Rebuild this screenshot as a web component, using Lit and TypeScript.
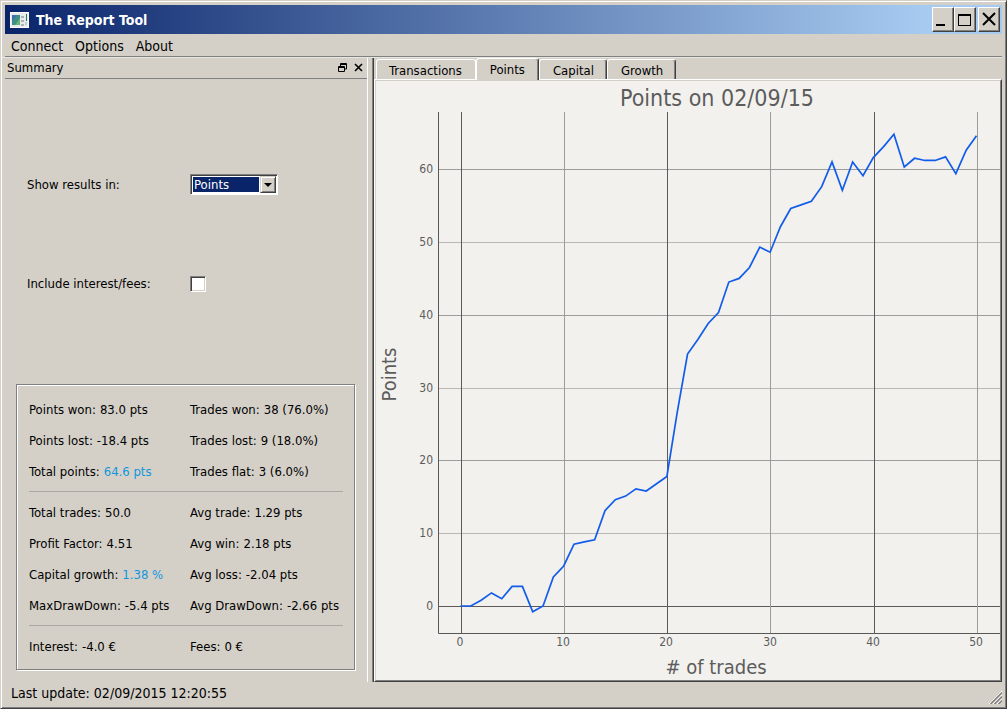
import { LitElement, html, svg, css } from "lit";
import { customElement, state } from "lit/decorators.js";

const POINTS = [
  0, 0, 0.8, 1.8, 1, 2.7, 2.7, -0.8, 0, 4, 5.5, 8.5, 8.8, 9.1, 13.1, 14.6, 15.1,
  16.1, 15.8, 16.8, 17.8, 26.6, 34.6, 36.6, 38.8, 40.3, 44.5, 45, 46.5, 49.3,
  48.6, 52.1, 54.6, 55.1, 55.6, 57.6, 61, 57.1, 61, 59.1, 61.6, 63.1, 64.8,
  60.3, 61.5, 61.2, 61.2, 61.7, 59.4, 62.6, 64.6,
];

@customElement("points-chart")
class PointsChart extends LitElement {
  @state() private w = 624;
  @state() private h = 599;
  private observer?: ResizeObserver;

  static styles = css`
    :host { display: block; overflow: hidden; min-width: 0; min-height: 0; contain: size; }
    svg { display: block; }
    text { fill: #5c5c5c; font-family: "DejaVu Sans Condensed", "Noto Sans", sans-serif; }
    .tick { font-size: 12px; }
    .title { font-size: 23px; }
    .name { font-size: 20px; }
    .axis { stroke: #585858; }
    .strong { stroke: #5a5a5a; }
    .medium { stroke: #9c9c9a; }
    .soft { stroke: #bab9b6; }
    .series { fill: none; stroke: #125cea; stroke-width: 1.7; }
  `;

  connectedCallback() {
    super.connectedCallback();
    this.observer = new ResizeObserver(([entry]) => {
      this.w = Math.round(entry.contentRect.width);
      this.h = Math.round(entry.contentRect.height);
    });
    this.observer.observe(this);
  }

  disconnectedCallback() {
    this.observer?.disconnect();
    super.disconnectedCallback();
  }

  render() {
    const left = 62;
    const top = 31;
    const bottom = this.h - 47;
    const x = (n: number) => left + 22 + ((this.w - left - 46) * n) / 50;
    const y = (v: number) => bottom - 27 - ((bottom - top - 58) * v) / 63.6;
    const px = (n: number) => Math.round(n) + 0.5;
    const shade = (n: number) => (n % 20 ? "medium" : "strong");
    const rowShade = (n: number) => (n === 0 ? "strong" : n % 20 ? "soft" : "medium");
    return html`<svg width=${this.w} height=${this.h} role="img" aria-label="Points per number of trades">
      ${[10, 20, 30, 40, 50, 60, 0].map(
        (v) => svg`<line class=${rowShade(v)} x1=${left} x2=${this.w} y1=${px(y(v))} y2=${px(y(v))} />
          <text class="tick" text-anchor="end" x=${left - 5} y=${Math.round(y(v)) + 4}>${v}</text>`
      )}
      ${[0, 10, 20, 30, 40, 50].map(
        (n) => svg`<line class=${shade(n)} x1=${px(x(n) + 0.7)} x2=${px(x(n) + 0.7)} y1=${top} y2=${bottom} />
          <text class="tick" text-anchor="middle" x=${Math.round(x(n))} y=${bottom + 13}>${n}</text>`
      )}
      <path class="axis" fill="none" d="M${left + 0.5} ${top}V${bottom + 0.5}H${this.w}" />
      <polyline class="series" points=${POINTS.map((v, n) => `${x(n) + 0.5},${y(v)}`).join(" ")} />
      <text class="title" text-anchor="middle" x=${(left + this.w) / 2 - 2} y="25">Points on 02/09/15</text>
      <text class="name" text-anchor="middle" x=${(left + this.w) / 2 - 3} y=${this.h - 6}># of trades</text>
      <text class="name" text-anchor="middle" transform="translate(20 ${(top + bottom) / 2 + 2}) rotate(-90)">Points</text>
    </svg>`;
  }
}

const TABS = ["Transactions", "Points", "Capital", "Growth"];

const GROUPS: [string, string, boolean?][][] = [
  [
    ["Points won", "83.0 pts"], ["Trades won", "38 (76.0%)"],
    ["Points lost", "-18.4 pts"], ["Trades lost", "9 (18.0%)"],
    ["Total points", "64.6 pts", true], ["Trades flat", "3 (6.0%)"],
  ],
  [
    ["Total trades", "50.0"], ["Avg trade", "1.29 pts"],
    ["Profit Factor", "4.51"], ["Avg win", "2.18 pts"],
    ["Capital growth", "1.38 %", true], ["Avg loss", "-2.04 pts"],
    ["MaxDrawDown", "-5.4 pts"], ["Avg DrawDown", "-2.66 pts"],
  ],
  [["Interest", "-4.0 €"], ["Fees", "0 €"]],
];

@customElement("app-root")
class AppRoot extends LitElement {
  @state() private tab = "Points";

  static styles = css`
    :host {
      display: block;
      height: 100vh;
      font: 13px/15px "DejaVu Sans Condensed", "Noto Sans", sans-serif;
      color: #000;
    }
    * { box-sizing: border-box; }
    button, select, input { font: inherit; color: inherit; margin: 0; border-radius: 0; }
    button { padding: 0; border: 0; background: none; }
    .window {
      display: flex; flex-direction: column; height: 100%;
      background: #d4d0c8;
      border: 1px solid; border-color: #d4d0c8 #404040 #404040 #d4d0c8;
      box-shadow: inset 1px 1px #fff, inset -1px -1px #808080;
      padding: 4px 4px 1px 1px;
    }
    .titlebar {
      display: flex; align-items: center; flex: none; height: 29px; margin-left: 3px; padding: 0 2px 0 5px;
      background: linear-gradient(90deg, #0a246a, #a6caf0 92%);
      color: #fff;
    }
    .titlebar h1 { flex: 1; margin: 0 0 0 7px; font-size: 14px; line-height: 18px; font-weight: bold; }
    .caption {
      width: 22px; height: 25px; background: #d4d0c8;
      border: 1px solid; border-color: #fff #404040 #404040 #fff;
      box-shadow: inset -1px -1px #808080;
    }
    .caption.close { margin-left: 2px; }
    svg { display: block; }
    .menubar {
      display: flex; flex: none; gap: 12px; height: 23px; margin-left: 3px; padding: 2px 6px 0;
      border-bottom: 1px solid #808080;
    }
    .menubar button { font-size: 14px; line-height: 20px; }
    .main { display: flex; flex: 1; min-height: 0; border-top: 1px solid #e8e6e0; }
    .dock { display: flex; flex-direction: column; flex: none; width: 365px; }
    .dock-title {
      display: flex; align-items: center; gap: 6px; height: 21px; margin-left: 3px; padding: 0 4px 0 2px;
      border-bottom: 1px solid #808080;
    }
    .dock-title h2 { flex: 1; margin: 0; font-size: 13px; line-height: 20px; font-weight: normal; }
    .form {
      display: flex; flex: 1; flex-direction: column; justify-content: space-evenly;
      padding: 17px 0 12px 25px;
    }
    .field { display: grid; grid-template-columns: 163px auto; align-items: center; justify-content: start; height: 21px; }
    .combo {
      display: grid; grid-template-columns: 1fr 16px; width: 88px; height: 21px;
      border: 1px solid; border-color: #808080 #fff #fff #808080;
      box-shadow: inset 1px 1px #404040; background: #fff; padding: 1px;
    }
    .combo select {
      grid-area: 1 / 1 / 2 / 3; appearance: none; border: 0; outline: 0;
      margin: 1px 17px 1px 1px; padding: 0 1px; line-height: 15px;
      background: #0a246a; color: #fff;
    }
    .drop {
      grid-area: 1 / 2; display: grid; place-items: center; pointer-events: none;
      background: #d4d0c8; border: 1px solid; border-color: #d4d0c8 #404040 #404040 #d4d0c8;
      box-shadow: inset 1px 1px #fff, inset -1px -1px #808080;
    }
    .check {
      appearance: none; width: 16px; height: 16px; background: #fff;
      border: 1px solid; border-color: #808080 #fff #fff #808080;
      box-shadow: inset 1px 1px #404040, inset -1px -1px #d4d0c8;
    }
    .check:checked { background: #fff radial-gradient(#000 35%, transparent 40%); }
    .stats {
      margin: 0 12px 12px 14px; padding: 9px 11px 3px 12px;
      border: 1px solid #808080; box-shadow: inset 1px 1px #fff, 1px 1px #fff;
    }
    .group { display: grid; grid-template-columns: 161px 1fr; margin: 0; padding-bottom: 4px; }
    .group + .group { border-top: 1px solid #aaa8a2; padding-top: 5px; }
    .stat { display: flex; gap: 4px; line-height: 31px; white-space: nowrap; }
    .stat dd { margin: 0; }
    .accent { color: #1296db; }
    .separator {
      flex: none; width: 7px; border: 1px solid; border-width: 0 1px; border-color: #fff #404040 #fff #fff;
      box-shadow: inset -1px 0 #808080;
    }
    .content { display: flex; flex: 1; flex-direction: column; min-width: 0; }
    .tabs { display: flex; align-items: flex-end; height: 21px; padding-left: 2px; }
    .tab {
      height: 20px; padding: 2px 13px 0 12px; border: 1px solid;
      border-color: #fff #404040 transparent #fff; border-bottom: 0;
      border-radius: 3px 3px 0 0; box-shadow: inset -1px 0 #808080;
      background: #d4d0c8;
    }
    .tab.before { border-right-color: #fff; box-shadow: none; }
    .tab.selected { height: 22px; padding: 1px 13px 2px; margin-bottom: -1px; position: relative; }
    .tab + .tab:not(.selected) { padding: 2px 12px 0 13px; }
    .pane {
      flex: 1; display: grid; min-height: 0; background: #f2f1ed;
      border: 1px solid; border-color: #fff #404040 #404040 #fff;
    }
    .inner { display: grid; border: 1px solid; border-color: #d4d0c8 #808080 #808080 #d4d0c8; min-width: 0; min-height: 0; }
    .status { display: flex; flex: none; justify-content: space-between; align-items: flex-end; height: 25px; padding: 0 0 3px 9px; }
    .status output { font-size: 14px; line-height: 22px; }
  `;

  render() {
    const active = TABS.indexOf(this.tab);
    return html`<div class="window">
      <header class="titlebar">
        <svg width="19" height="16" viewBox="0 0 19 16" aria-hidden="true">
          <rect width="19" height="16" fill="#e9ebea" />
          <path d="M0 .5H19M.5 0V16M18.5 0V16M0 15.5H19" stroke="#fafafa" />
          <path d="M2 3H10V13H2Z" fill="#3f8f86" />
          <path d="M2 3H7L2 9Z" fill="#426fb2" />
          <path d="M5 13L10 6V13Z" fill="#68b474" />
          <path d="M11 4H14V6H11ZM11 8H14V10H11ZM11 12H14V14H11Z" fill="#a8b2bb" />
          <path d="M16 2H17V9H16Z" fill="#287b56" />
          <path d="M15 10H17V13H15Z" fill="#c5cbd0" />
        </svg>
        <h1>The Report Tool</h1>
        <button class="caption" aria-label="Minimize">
          <svg width="20" height="23"><path d="M3 16H12V18H3Z" /></svg>
        </button>
        <button class="caption" aria-label="Maximize">
          <svg width="20" height="23"><path d="M3 6H16V18H3ZM4 8V17H15V8Z" fill-rule="evenodd" /></svg>
        </button>
        <button class="caption close" aria-label="Close">
          <svg width="20" height="23"><path d="M4 5L16 17M16 5L4 17" stroke="#000" stroke-width="2" /></svg>
        </button>
      </header>
      <nav class="menubar">
        <button>Connect</button><button>Options</button><button>About</button>
      </nav>
      <main class="main">
        <section class="dock">
          <div class="dock-title">
            <h2>Summary</h2>
            <button aria-label="Float">
              <svg width="10" height="10" fill="none" stroke="#000">
                <path d="M2.5 4V.5H8.5V6H6M2 1.5H9M.5 3.5H6.5V8.5H.5ZM0 4.5H7" />
              </svg>
            </button>
            <button aria-label="Close panel">
              <svg width="9" height="10"><path d="M1 1L8 8M8 1L1 8" stroke="#000" stroke-width="1.6" /></svg>
            </button>
          </div>
          <form class="form">
            <div class="field">
              <label for="unit">Show results in:</label>
              <span class="combo">
                <select id="unit"><option>Points</option><option>Capital</option></select>
                <span class="drop"><svg width="8" height="4"><path d="M0 0H8L4 4Z" /></svg></span>
              </span>
            </div>
            <div class="field">
              <label for="fees">Include interest/fees:</label>
              <input class="check" id="fees" type="checkbox" />
            </div>
          </form>
          <div class="stats">
            ${GROUPS.map(
              (group) => html`<dl class="group">
                ${group.map(
                  ([name, value, accent]) => html`<div class="stat">
                    <dt>${name}:</dt><dd class=${accent ? "accent" : ""}>${value}</dd>
                  </div>`
                )}
              </dl>`
            )}
          </div>
        </section>
        <div class="separator"></div>
        <section class="content">
          <div class="tabs" role="tablist">
            ${TABS.map(
              (name, i) => html`<button
                role="tab"
                class="tab ${i === active ? "selected" : i === active - 1 ? "before" : ""}"
                aria-selected=${i === active}
                @click=${() => (this.tab = name)}
              >${name}</button>`
            )}
          </div>
          <div class="pane" role="tabpanel"><div class="inner"><points-chart></points-chart></div></div>
        </section>
      </main>
      <footer class="status">
        <output>Last update: 02/09/2015 12:20:55</output>
        <svg width="13" height="13" aria-hidden="true">
          <path d="M0 13L13 0M4 13L13 4M8 13L13 8" stroke="#fff" />
          <path d="M1.5 13L13 1.5M5.5 13L13 5.5M9.5 13L13 9.5" stroke="#808080" stroke-width="1.5" />
        </svg>
      </footer>
    </div>`;
  }
}
